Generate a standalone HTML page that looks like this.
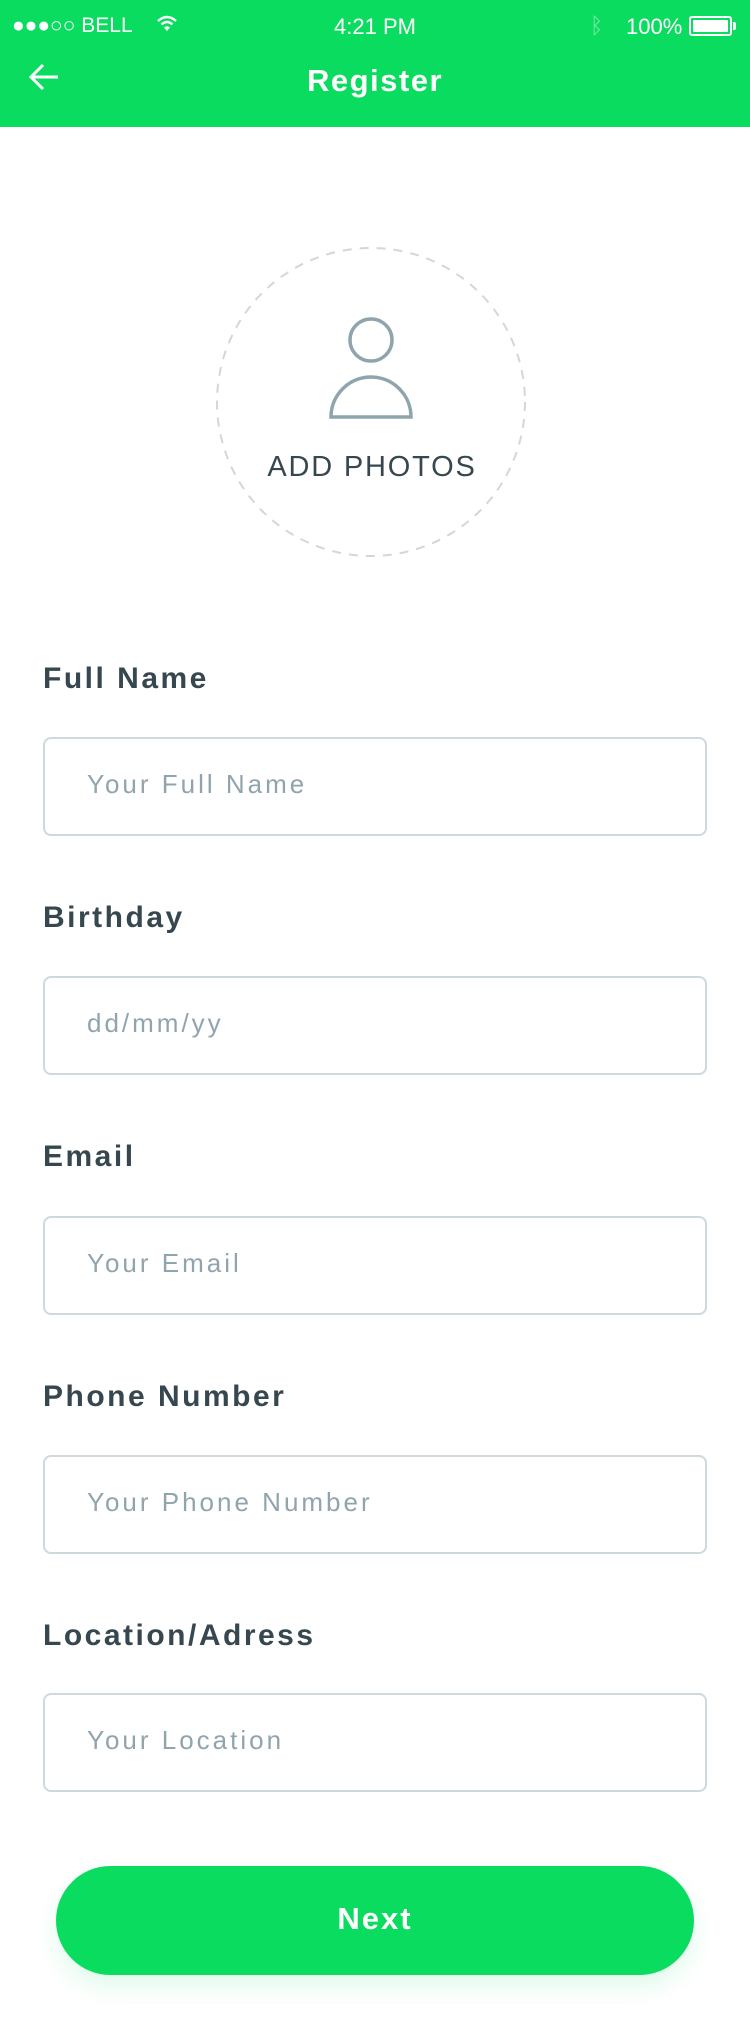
<!DOCTYPE html>
<html><head><meta charset="utf-8"><style>
*{margin:0;padding:0;box-sizing:border-box}
body{width:750px;height:2033px;background:#fff;font-family:"Liberation Sans",sans-serif;position:relative;overflow:hidden}
.hdr{position:absolute;left:0;top:0;width:750px;height:127px;background:#0adc5f;color:#fff}
.abs{position:absolute}
.lbl{position:absolute;left:43px;font-size:30px;font-weight:bold;color:#37474f;letter-spacing:2.5px}
.inp{position:absolute;left:43px;width:664px;height:99px;border:2px solid #cfd8dc;border-radius:8px;font-size:26px;color:#90a4ae;padding-left:42px;line-height:91px;letter-spacing:3px}
.btn{position:absolute;left:56px;top:1866px;width:638px;height:109px;border-radius:55px;background:#0adc5f;color:#fff;font-size:31px;font-weight:bold;text-align:center;line-height:105px;letter-spacing:2px;box-shadow:0 12px 24px rgba(10,220,95,0.12)}
</style></head><body>
<div class="hdr">
  <div class="abs" style="left:12px;top:14px;font-size:21px;">●●●○○ BELL</div>
  <svg class="abs" style="left:156px;top:14px" width="22" height="20" viewBox="0 0 22 20"><path d="M2 7 Q11 -1 20 7" stroke="#fff" stroke-width="2.5" fill="none"/><path d="M5.5 10.5 Q11 5.5 16.5 10.5" stroke="#fff" stroke-width="2.5" fill="none"/><path d="M11 17 L8 13.5 Q11 11 14 13.5 Z" fill="#fff"/></svg>
  <div class="abs" style="left:0;width:750px;text-align:center;top:14px;font-size:22px;">4:21 PM</div>
  <div class="abs" style="left:590px;top:13px;font-size:22px;color:#7fe9a9">ᛒ</div>
  <div class="abs" style="left:626px;top:14px;font-size:22px;">100%</div>
  <div class="abs" style="left:689px;top:16px;width:43px;height:20px;border:2px solid #fff;border-radius:3px;padding:2px"><div style="width:100%;height:100%;background:#fff;border-radius:1px"></div></div>
  <div class="abs" style="left:733px;top:22px;width:3px;height:8px;background:#fff;border-radius:0 2px 2px 0"></div>
  <svg class="abs" style="left:28px;top:62px" width="32" height="30" viewBox="0 0 32 30"><path d="M30 15 H3 M15 3 L3 15 L15 27" stroke="#fff" stroke-width="3" fill="none"/></svg>
  <div class="abs" style="left:0;width:750px;text-align:center;top:63px;font-size:31px;font-weight:bold;letter-spacing:1.5px">Register</div>
</div>
<svg class="abs" style="left:0;top:0" width="750" height="600">
  <circle cx="371" cy="402" r="154" fill="none" stroke="#cfd8dc" stroke-width="2" stroke-dasharray="9 8"/>
  <circle cx="371" cy="340" r="21" fill="none" stroke="#90a4ae" stroke-width="3.5"/>
  <path d="M331 417 A40 40 0 0 1 411 417 Z" fill="none" stroke="#90a4ae" stroke-width="3.5"/>
</svg>
<div class="abs" style="left:0;width:744px;text-align:center;top:451px;font-size:29px;color:#37474f;letter-spacing:1.8px">ADD PHOTOS</div>
<div class="lbl" style="top:662px">Full Name</div>
<div class="inp" style="top:737px">Your Full Name</div>
<div class="lbl" style="top:901px">Birthday</div>
<div class="inp" style="top:976px">dd/mm/yy</div>
<div class="lbl" style="top:1140px">Email</div>
<div class="inp" style="top:1216px">Your Email</div>
<div class="lbl" style="top:1380px">Phone Number</div>
<div class="inp" style="top:1455px">Your Phone Number</div>
<div class="lbl" style="top:1619px">Location/Adress</div>
<div class="inp" style="top:1693px">Your Location</div>
<div class="btn">Next</div>
</body></html>
